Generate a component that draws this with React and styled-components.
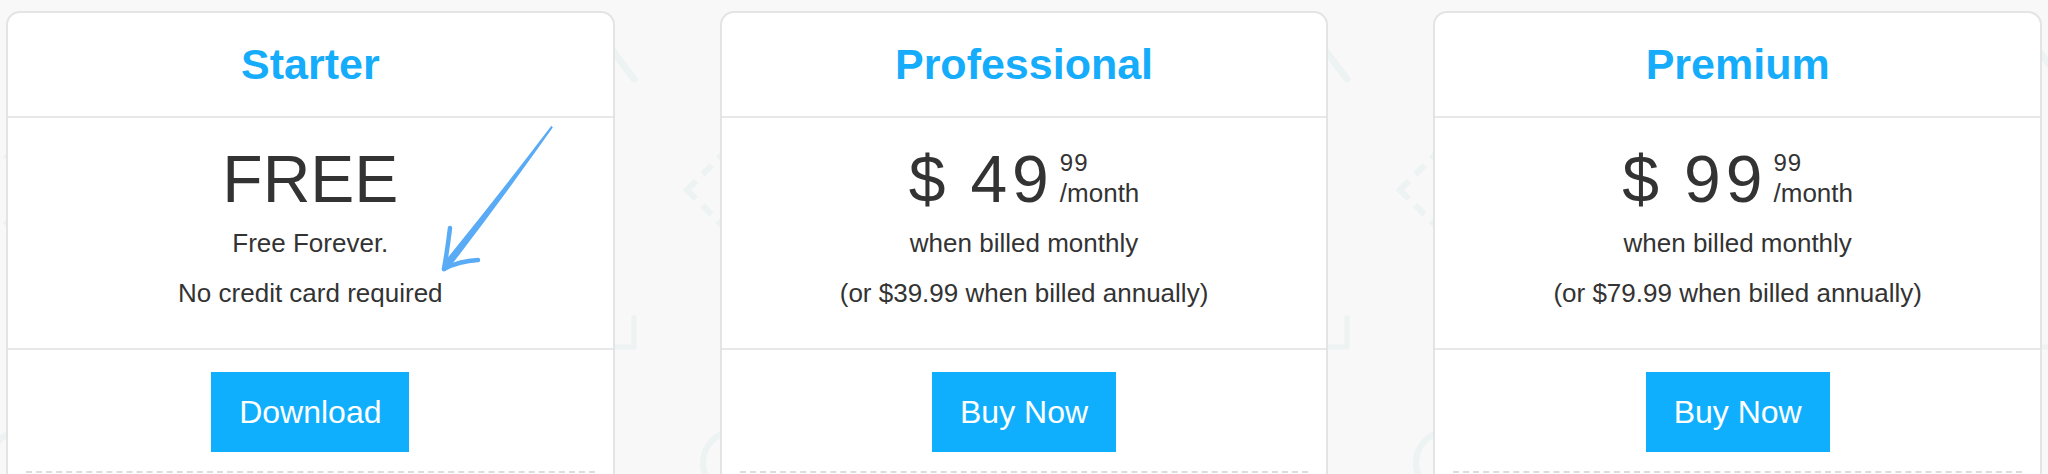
import React from 'react';
import styled, { createGlobalStyle } from 'styled-components';

const pattern = `<svg xmlns="http://www.w3.org/2000/svg" width="713" height="520" viewBox="0 0 713 520">
<g fill="none" stroke="#edf2f2" stroke-width="7" stroke-linecap="round">
<path d="M585 22 L628 79"/>
<path d="M681 190 L726 145 L771 190 L726 235 Z" stroke-dasharray="13 9" stroke-linecap="butt" stroke-width="6"/>
<path d="M-32 190 L13 145 L58 190 L13 235 Z" stroke-dasharray="13 9" stroke-linecap="butt" stroke-width="6"/>
<path d="M628 318 L628 347 L611 347" stroke-linecap="square" stroke-width="5"/>
<circle cx="729" cy="463" r="32" stroke-width="6"/>
<circle cx="16" cy="463" r="32" stroke-width="6"/>
</g></svg>`;

const GlobalStyle = createGlobalStyle`
    body{
        margin: 0;
        background-color: #f8f8f8;
        background-image: url("data:image/svg+xml,${encodeURIComponent(pattern)}");
        background-repeat: repeat-x;
        background-position: 6px 0;
        font-family: "Liberation Sans", Arial, sans-serif;
        color: #333;
    }
`

const Wrapper = styled.div`
    display: flex;
    gap: 105px;
    padding: 11px 6px 0;
    align-items: flex-start;
`

const Card = styled.div`
    position: relative;
    flex: 1;
    background: #fff;
    border: 2px solid #e4e4e4;
    border-radius: 14px;
    overflow: hidden;
`

const Header = styled.div`
    height: 105px;
    box-sizing: border-box;
    border-bottom: 2px solid #e8e8e8;
    display: flex;
    align-items: center;
    justify-content: center;
`

const Title = styled.h2`
    margin: 0;
    font-size: 43px;
    line-height: 1;
    font-weight: 700;
    color: #14acfb;
`

const Body = styled.div`
    padding: 28px 0 30px;
    border-bottom: 2px solid #e8e8e8;
    text-align: center;
`

const PriceRow = styled.div`
    font-size: 66px;
    line-height: 66px;
    white-space: nowrap;
`

const Currency = styled.span`
    margin-right: 25px;
`

const Amount = styled.span`
    letter-spacing: ${p => (p.$wide ? '5px' : '0')};
`

const Cents = styled.span`
    display: inline-block;
    vertical-align: baseline;
    text-align: left;
    margin-left: 6px;
    span{
        display: block;
        line-height: 30px;
    }
    span:first-child{
        font-size: 24px;
        letter-spacing: 1px;
    }
    span:last-child{
        font-size: 26px;
    }
`

const Notes = styled.div`
    margin-top: 6px;
`

const Note = styled.p`
    margin: 0;
    font-size: 26px;
    line-height: 50px;
`

const Footer = styled.div`
    padding: 22px 0 19px;
    display: flex;
    justify-content: center;
`

const Button = styled.button`
    height: 80px;
    padding: 0 28px;
    border: 0;
    background: #10affe;
    color: #fff;
    font-family: inherit;
    font-size: 32px;
    cursor: pointer;
`

const Divider = styled.div`
    margin: 0 18px;
    height: 60px;
    border-top: 2px dashed #dcdcdc;
`

const Arrow = styled.svg`
    position: absolute;
    left: 417px;
    top: 102px;
    width: 140px;
    height: 165px;
`

const plans = [
    {
        name: 'Starter',
        free: true,
        notes: ['Free Forever.', 'No credit card required'],
        action: 'Download'
    },
    {
        name: 'Professional',
        price: '49',
        notes: ['when billed monthly', '(or $39.99 when billed annually)'],
        action: 'Buy Now'
    },
    {
        name: 'Premium',
        price: '99',
        notes: ['when billed monthly', '(or $79.99 when billed annually)'],
        action: 'Buy Now'
    }
]

const HandArrow = () => (
    <Arrow viewBox="0 0 140 165">
        <path d="M126.4 10.8 L127.8 12.6 Q80 80 28 148 L21 152 L22.5 143 Q76 77 126.4 10.8 Z" fill="#5aabf5"/>
        <path d="M25 113 Q22.5 134 19 154" fill="none" stroke="#5aabf5" strokeWidth="4.5" strokeLinecap="round"/>
        <path d="M19 154 Q34 146 53 145" fill="none" stroke="#5aabf5" strokeWidth="4.5" strokeLinecap="round"/>
    </Arrow>
)

const App = () => (
    <>
        <GlobalStyle/>
        <Wrapper>
            {plans.map(plan => (
                <Card key={plan.name}>
                    <Header><Title>{plan.name}</Title></Header>
                    <Body>
                        <PriceRow>
                            {plan.free ? 'FREE' : (
                                <>
                                    <Currency>$</Currency>
                                    <Amount $wide>{plan.price}</Amount>
                                    <Cents><span>99</span><span>/month</span></Cents>
                                </>
                            )}
                        </PriceRow>
                        <Notes>
                            {plan.notes.map(n => <Note key={n}>{n}</Note>)}
                        </Notes>
                    </Body>
                    <Footer><Button>{plan.action}</Button></Footer>
                    <Divider/>
                    {plan.free && <HandArrow/>}
                </Card>
            ))}
        </Wrapper>
    </>
)

export default App;
